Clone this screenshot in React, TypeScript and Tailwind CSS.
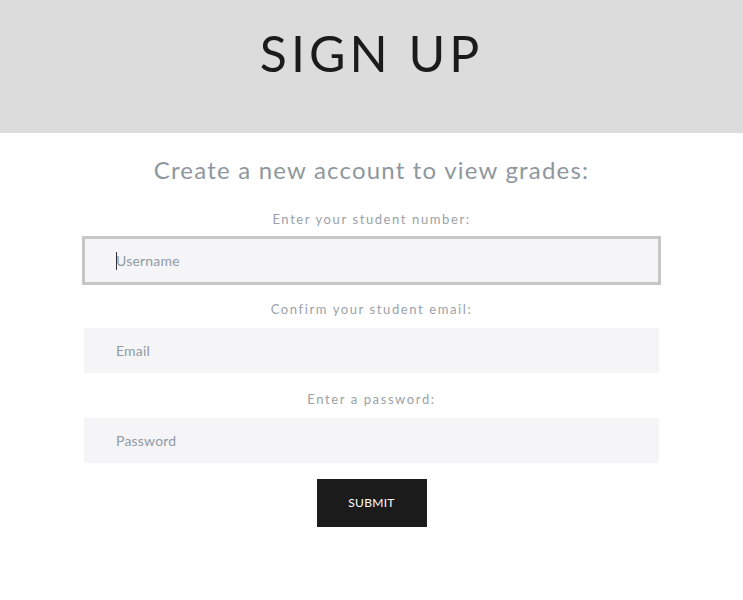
import React from "react";

const font = { fontFamily: "Lato, 'Noto Sans', sans-serif" };

function Field({ label, placeholder, focused }: { label: string; placeholder: string; focused?: boolean }) {
  return (
    <div className="flex flex-col items-center">
      <div className="pt-[17px] pb-[10px] text-[13px] leading-[18px] tracking-[1.6px] text-[#9aa2a8]">{label}</div>
      <div className="relative w-[575px]">
        <input
          className={
            "block h-[45px] w-full bg-[#f5f5f7] pl-[32px] text-[14px] tracking-[0.2px] text-[#555] placeholder:text-[#8f9aa5] outline-none" +
            (focused ? " outline-[3px] outline-solid outline-[#c6c6c6] -outline-offset-1" : "")
          }
          style={font}
          placeholder={placeholder}
          readOnly
        />
        {focused && <span className="absolute left-[32px] top-[14px] h-[18px] w-px bg-[#333]" />}
      </div>
    </div>
  );
}

export default function App() {
  return (
    <div className="min-h-[600px] bg-white" style={font}>
      <header className="flex h-[133px] items-center justify-center bg-[#dcdcdc]">
        <h1 className="text-[50px] font-normal tracking-[4px] text-[#1b1b1b] pb-[26px]">SIGN UP</h1>
      </header>
      <div className="flex flex-col items-center">
        <h2 className="pt-[22px] pb-[8px] text-[24px] leading-[30px] tracking-[1.2px] text-[#8e979e]">
          Create a new account to view grades:
        </h2>
        <Field label="Enter your student number:" placeholder="Username" focused />
        <Field label="Confirm your student email:" placeholder="Email" />
        <Field label="Enter a password:" placeholder="Password" />
        <button className="mt-[16px] h-[48px] w-[110px] bg-[#1b1b1b] text-[12px] tracking-[0.3px] text-white">SUBMIT</button>
      </div>
    </div>
  );
}
